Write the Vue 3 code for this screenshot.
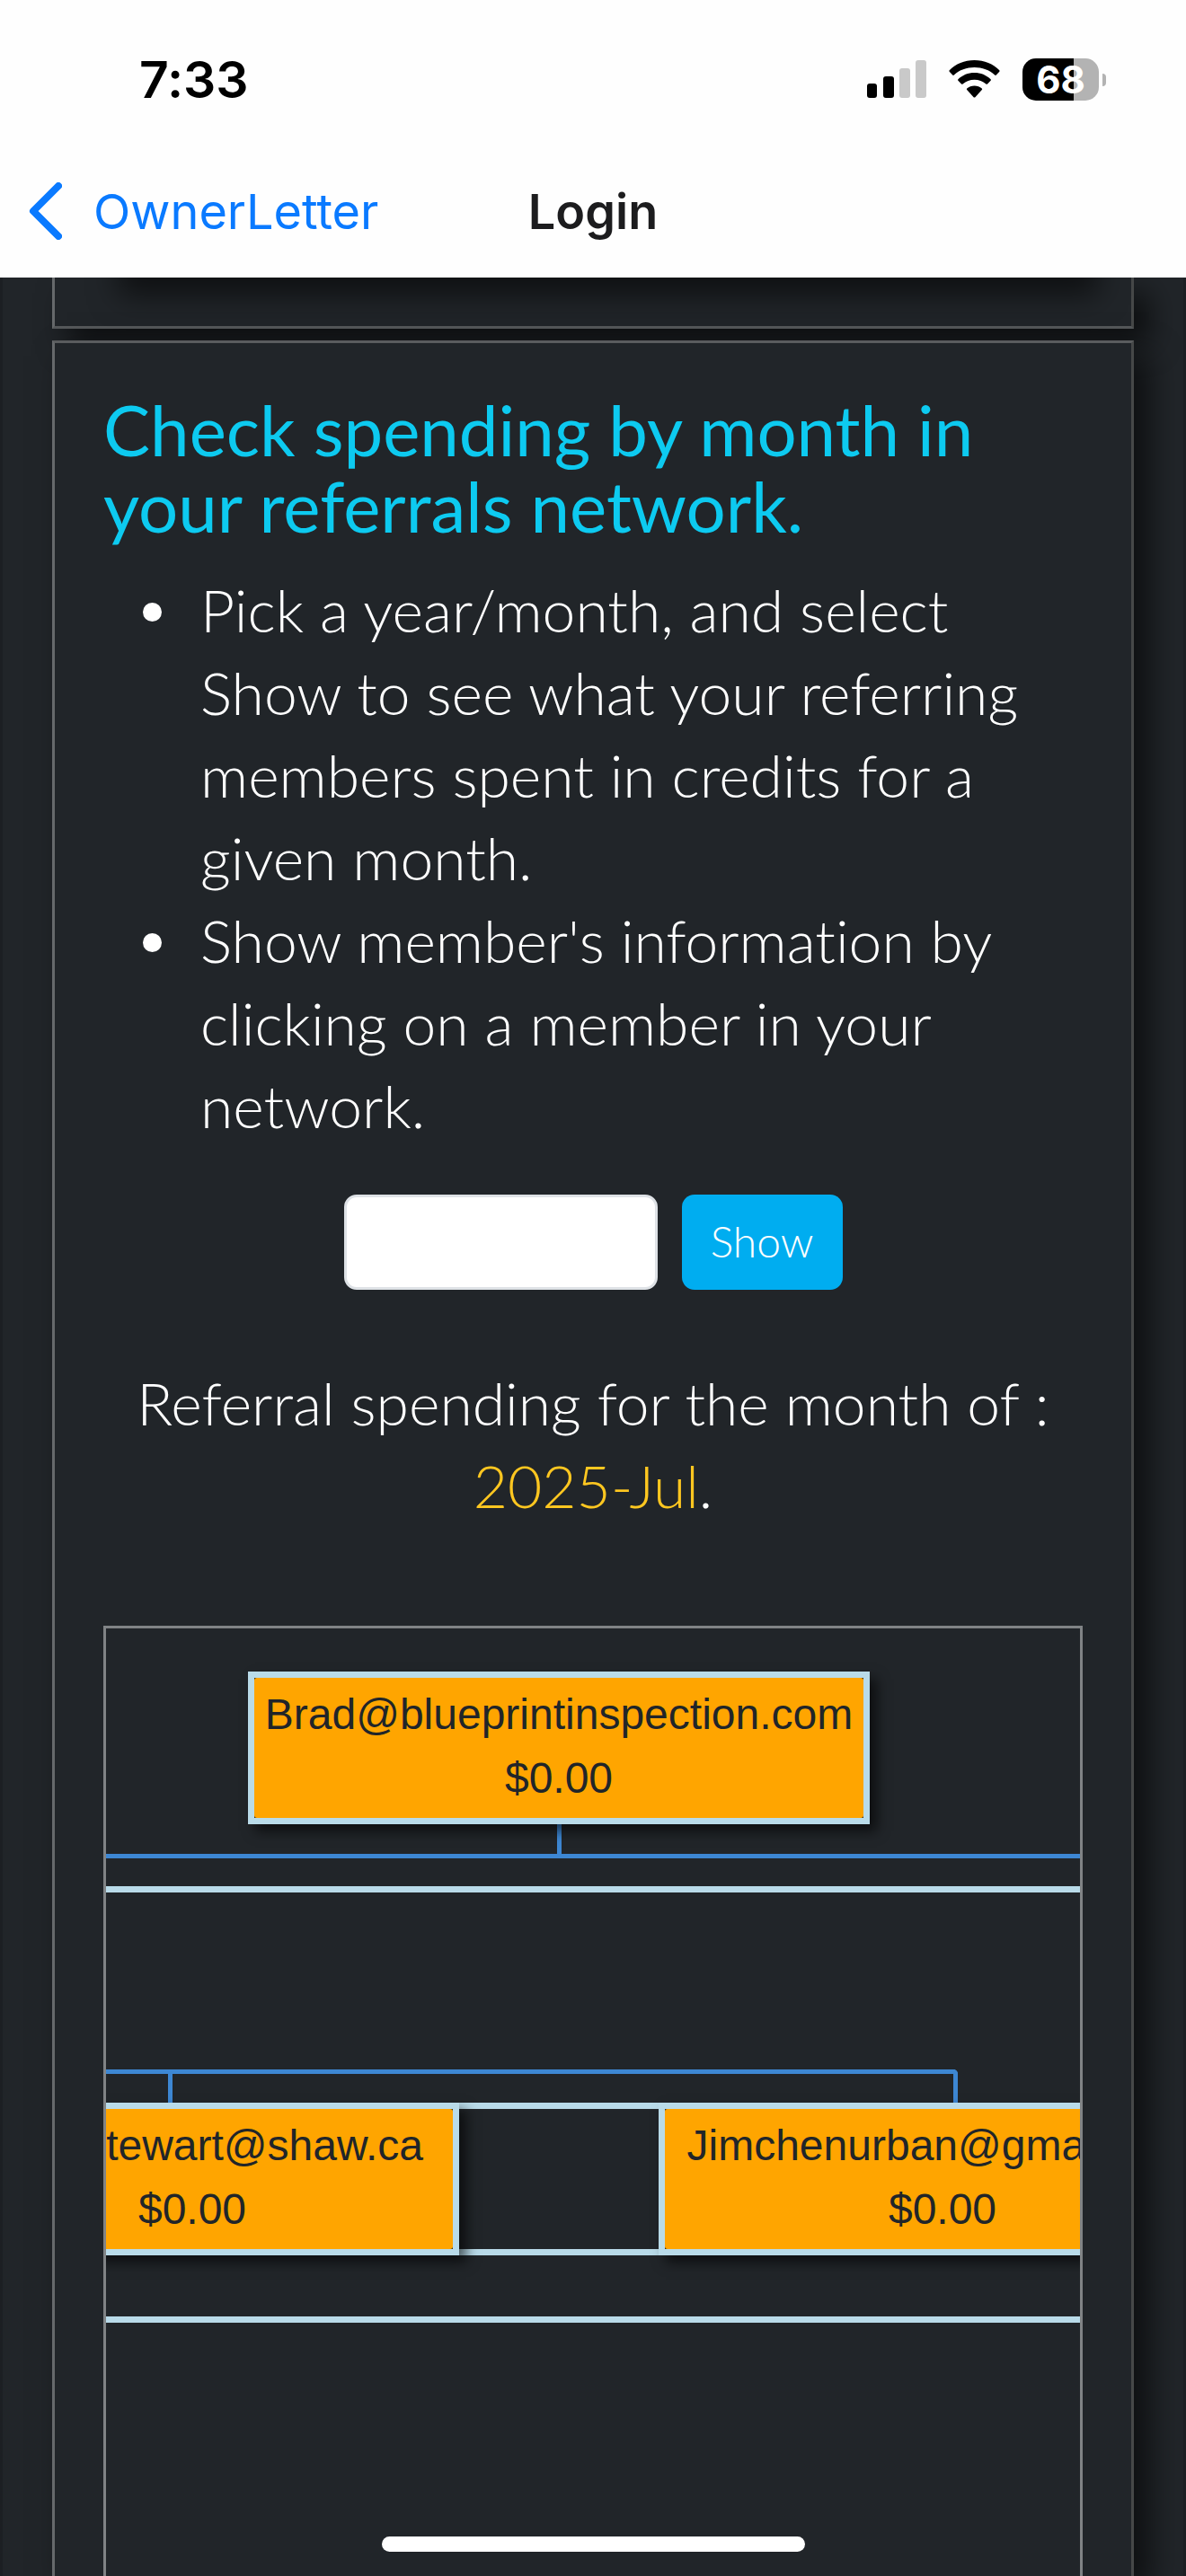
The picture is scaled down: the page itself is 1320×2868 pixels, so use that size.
<script setup>
import { ref } from 'vue'

const period = ref('')
const shown = ref('2025-Jul')
const tips = [
  ['Pick a year/month, and select', 'Show to see what your referring', 'members spent in credits for a', 'given month.'],
  ["Show member's information by", 'clicking on a member in your', 'network.'],
]
const members = [
  { id: 'root', email: 'Brad@blueprintinspection.com', amount: '$0.00' },
  { id: 'left', email: 'tewart@shaw.ca', amount: '$0.00' },
  { id: 'right', email: 'Jimchenurban@gmail.com', amount: '$0.00' },
]
</script>

<template>
  <div class="page">
    <header>
      <div class="status">
        <span class="time">7:33</span>
        <div class="indicators">
          <svg class="signal" width="66" height="42" viewBox="0 0 66 42" aria-hidden="true">
            <rect x="0" y="26" width="11" height="16" rx="3" />
            <rect x="18" y="18" width="12" height="24" rx="3" />
            <rect x="36" y="9" width="12" height="33" rx="3" fill="#c9c9c9" />
            <rect x="54" y="0" width="12" height="42" rx="3" fill="#c9c9c9" />
          </svg>
          <svg class="wifi" width="57" height="42" viewBox="0 0 57 42" aria-hidden="true">
            <path d="M28.500 0C39.500 0 49.500 4.200 56.300 11.200Q57 12 56.300 12.800L52.800 16.500Q52 17.300 51.200 16.500C45.200 10.800 37.200 7.900 28.500 7.900S11.800 10.800 5.800 16.500Q5 17.300 4.200 16.500L.7 12.800Q0 12 .7 11.200C7.500 4.200 17.500 0 28.500 0Z" />
            <path d="M28.500 14C35.500 14 41.800 16.600 46.600 21.200Q47.400 22 46.600 22.800L43 26.400Q42.200 27.200 41.400 26.500C37.900 23.400 33.400 21.700 28.500 21.700S19.100 23.400 15.600 26.500Q14.800 27.200 14 26.400L10.400 22.800Q9.600 22 10.400 21.200C15.200 16.600 21.500 14 28.500 14Z" />
            <path d="M28.500 28.400C31.700 28.400 34.600 29.500 36.800 31.400Q37.600 32.100 36.800 33L29.400 41.200Q28.500 42 27.600 41.200L20.200 33Q19.400 32.100 20.200 31.400C22.400 29.500 25.300 28.400 28.500 28.400Z" />
          </svg>
          <div class="battery"><span class="charge">68</span><i class="nub"></i></div>
        </div>
      </div>
      <nav>
        <a class="back" href="#">
          <svg width="37" height="64" viewBox="0 0 37 64" aria-hidden="true">
            <path d="M33 4L5 32L33 60" fill="none" stroke="currentColor" stroke-width="8" stroke-linecap="round" stroke-linejoin="round" />
          </svg>
          <span>OwnerLetter</span>
        </a>
        <span class="title">Login</span>
      </nav>
    </header>

    <main>
      <section class="card previous"><div class="panel"></div></section>

      <section class="card spending">
        <h1>Check spending by month in<br />your referrals network.</h1>
        <ul>
          <li v-for="(lines, i) in tips" :key="i">
            <p><template v-for="(line, n) in lines" :key="n"><br v-if="n" />{{ line }}</template></p>
          </li>
        </ul>
        <form @submit.prevent>
          <input v-model="period" type="text" aria-label="Year and month" />
          <button type="submit">Show</button>
        </form>
        <p class="summary">Referral spending for the month of :<br /><span>{{ shown }}</span>.</p>

        <div class="chart">
          <i class="cell-line first"></i>
          <i class="cell-line row-top"></i>
          <i class="cell-line row-bottom"></i>
          <i class="cell-line last"></i>
          <i class="link trunk"></i>
          <i class="link stem"></i>
          <i class="link branch"></i>
          <i class="link drop"></i>
          <div v-for="m in members" :key="m.id" class="node" :class="m.id">
            <div class="fill">
              <div class="email">{{ m.email }}</div>
              <div>{{ m.amount }}</div>
            </div>
          </div>
        </div>
      </section>
    </main>
    <div class="home-indicator"></div>
  </div>
</template>

<style>
body {
  margin: 0;
  background: #212529;
}
</style>

<style scoped>
.page {
  display: flex;
  flex-direction: column;
  min-height: 100vh;
  color: #fff;
  font-family: Lato, sans-serif;
  font-variant-ligatures: none;
}
header {
  height: 309px;
  background: #fefefe;
  color: #000;
  font-family: Inter, sans-serif;
}
.status {
  display: flex;
  align-items: center;
  justify-content: space-between;
  height: 176px;
  padding: 0 97px 0 155px;
}
.time {
  font-size: 57px;
  font-weight: 600;
}
.indicators {
  display: flex;
  align-items: center;
  gap: 25px;
}
.battery {
  position: relative;
  width: 85px;
  height: 47px;
  border-radius: 15px;
  background: linear-gradient(90deg, #000 57px, #b3b3b3 57px);
  color: #fff;
  font-size: 42px;
  font-weight: 700;
  line-height: 47px;
  text-align: center;
}
.nub {
  position: absolute;
  top: 17px;
  right: -8px;
  width: 4px;
  height: 14px;
  border-radius: 0 4px 4px 0;
  background: #b3b3b3;
}
nav {
  display: grid;
  grid-template-columns: 1fr auto 1fr;
  align-items: center;
  height: 118px;
  padding: 0 32px;
  font-size: 54px;
}
.back {
  display: flex;
  align-items: center;
  gap: 35px;
  color: #0a7aff;
  text-decoration: none;
}
.title {
  color: #1c1c1e;
  font-weight: 600;
}
main {
  flex: 1;
  display: flex;
  flex-direction: column;
  gap: 13px;
  overflow: hidden;
  padding: 0 55px;
  border: solid #1c1f23;
  border-width: 0 3px;
}
.card {
  padding: 54px 54px 0;
  border: 3px solid;
  border-color: #5a5c5e #464848 #55585a #66696b;
  background: #212529;
  box-shadow: 17px 17px 33px rgba(0, 0, 0, 0.6);
}
.previous {
  height: 54px;
  padding-top: 0;
  border-top: 0;
}
.panel {
  height: 80px;
  margin-top: -80px;
  box-shadow: 17px 20px 33px rgba(0, 0, 0, 0.55);
}
.spending {
  flex: 1;
  display: flex;
  flex-direction: column;
  border-bottom: 0;
}
h1 {
  margin: 0 0 27px;
  color: #0dcaf0;
  font-size: 78px;
  font-weight: 400;
  line-height: 85px;
}
ul {
  margin: 0 0 53px;
  padding: 0 0 0 44px;
  list-style: none;
  font-size: 66px;
  font-weight: 300;
  line-height: 92px;
}
li {
  display: flex;
  gap: 43px;
}
li::before {
  content: '';
  flex: none;
  width: 21px;
  height: 21px;
  margin-top: 38px;
  border-radius: 50%;
  background: #fff;
}
li p {
  margin: 0;
}
form {
  display: flex;
  justify-content: center;
  gap: 27px;
  margin-bottom: 80px;
}
input,
button {
  box-sizing: border-box;
  height: 106px;
  border-radius: 14px;
  font-family: inherit;
  font-size: 48px;
}
input {
  width: 349px;
  border: 3px solid #dee2e6;
  background: #fff;
}
button {
  width: 179px;
  padding: 0 0 3px;
  border: 0;
  background: #00adf0;
  color: #fff;
  font-weight: 300;
}
.summary {
  margin: 0 0 110px;
  font-size: 66px;
  font-weight: 300;
  line-height: 92px;
  text-align: center;
}
.summary span {
  color: #ffc720;
}
.chart {
  position: relative;
  flex: 1;
  min-height: 900px;
  overflow: hidden;
  border: 3px solid #808385;
  border-bottom: 0;
  color: #212529;
  font-family: 'Liberation Sans', Arial, sans-serif;
  font-size: 48px;
  line-height: 71px;
  text-align: center;
}
.cell-line,
.link,
.node {
  position: absolute;
  box-sizing: border-box;
}
.cell-line {
  left: 0;
  right: 0;
  height: 7px;
  background: #b9dbe9;
}
.first { top: 287px; }
.row-top { top: 528px; }
.row-bottom { top: 691px; }
.last { top: 766px; }
.link {
  border: 0 solid #3d87d3;
}
.trunk {
  top: 218px;
  left: 502px;
  height: 34px;
  border-left-width: 5px;
}
.stem {
  top: 251px;
  left: 0;
  right: 0;
  border-top-width: 5px;
}
.branch {
  top: 491px;
  left: 0;
  width: 948px;
  height: 37px;
  border-width: 5px 5px 0 0;
  border-radius: 0 5px 0 0;
}
.drop {
  top: 493px;
  left: 69px;
  height: 35px;
  border-left-width: 5px;
}
.node {
  height: 170px;
  border: 7px solid #b9dbe9;
  background: #212529;
  box-shadow: 8px 8px 13px rgba(0, 0, 0, 0.6);
}
.root {
  top: 48px;
  left: 158px;
  width: 692px;
}
.left {
  top: 528px;
  left: -201px;
  width: 594px;
}
.right {
  top: 528px;
  left: 615px;
  width: 632px;
}
.fill {
  height: 151px;
  padding-top: 5px;
  border-radius: 3px;
  background: #ffa500;
}
.left .email {
  padding-right: 33px;
  text-align: right;
}
.home-indicator {
  position: fixed;
  right: 0;
  bottom: 27px;
  left: 0;
  width: 471px;
  height: 17px;
  margin: 0 auto;
  border-radius: 9px;
  background: #fff;
}
</style>
